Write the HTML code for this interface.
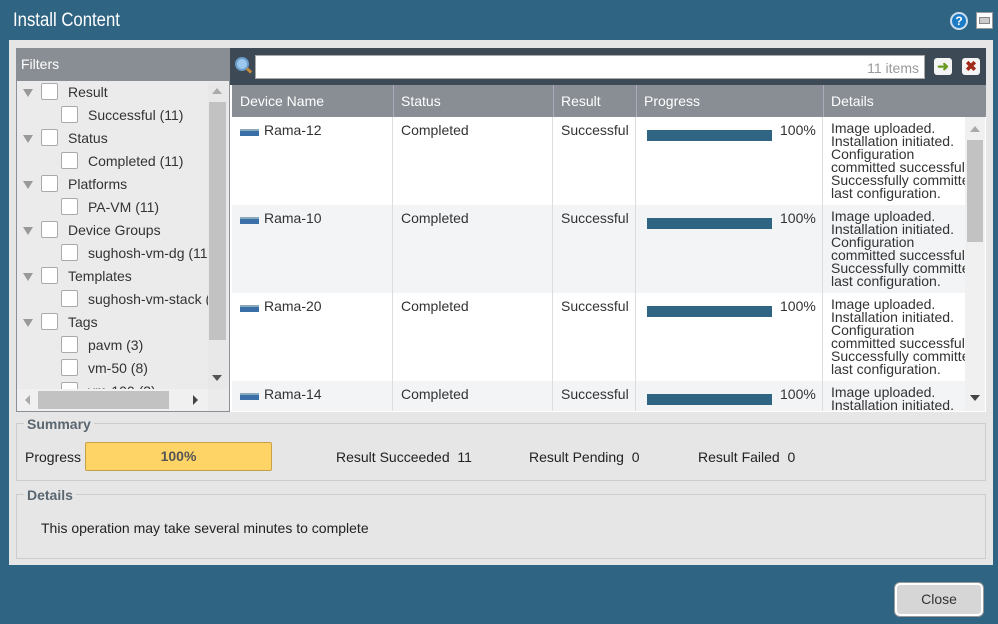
<!DOCTYPE html><html><head><style>
*{box-sizing:border-box;margin:0;padding:0}
body{width:998px;height:624px;background:#2f6583;font-family:"Liberation Sans",sans-serif;font-size:14px;color:#333;position:relative;overflow:hidden}
.a{position:absolute}
.cb{position:absolute;width:17px;height:17px;background:#fff;border:1px solid #aaa;border-radius:2px}
.tri{position:absolute;width:0;height:0;border-left:5px solid transparent;border-right:5px solid transparent;border-top:8px solid #999}
.fl{position:absolute;font-size:14px;color:#333}
.row{position:absolute;left:232px;width:733px;height:88px}
.row div{position:absolute;top:5px}
.bar{position:absolute;left:11px;top:8px!important;width:125px;height:11px;background:#2f6583}
.ic{position:absolute;left:8px;top:12px!important;width:19px;height:7px;background:#3a6fa8;border-top:2px solid #8ab}
.det{left:599px;width:134px;height:83px;line-height:13px;overflow:hidden;font-size:14px;white-space:nowrap}
.vl{position:absolute;width:1px;background:#ddd}
</style></head><body>
<div class="a" style="left:13px;top:10px;color:#fff;font-size:19px;transform:scaleX(.88);transform-origin:left">Install Content</div>
<div class="a" style="left:950px;top:12px;width:18px;height:18px;border-radius:50%;background:#1b7bc4;border:2px solid #cde;color:#fff;font-weight:bold;font-size:12px;text-align:center;line-height:14px">?</div>
<div class="a" style="left:976px;top:12px;width:17px;height:17px;background:#fff;border:1px solid #999"><div style="margin:4px 2px;height:7px;border:1px solid #888;background:#ccc"></div></div>
<div class="a" style="left:9px;top:40px;width:984px;height:525px;background:#e6e6e6"></div>
<div class="a" style="left:16px;top:48px;width:214px;height:364px;background:#ebebeb;border:1px solid #8a9096"></div>
<div class="a" style="left:16px;top:48px;width:214px;height:33px;background:#888e94;color:#fff;padding:8px 5px">Filters</div>
<div class="a" style="left:208px;top:82px;width:20px;height:307px;background:#e8e8e8"></div>
<div class="a" style="left:209px;top:102px;width:17px;height:238px;background:#c2c2c2"></div>
<div class="a" style="left:212px;top:88px;border-left:5px solid transparent;border-right:5px solid transparent;border-bottom:6px solid #aaa"></div>
<div class="a" style="left:212px;top:375px;border-left:5px solid transparent;border-right:5px solid transparent;border-top:6px solid #555"></div>
<div class="a" style="left:17px;top:389px;width:191px;height:22px;background:#f0f0f0"></div>
<div class="a" style="left:38px;top:391px;width:131px;height:18px;background:#c2c2c2"></div>
<div class="a" style="left:25px;top:395px;border-top:5px solid transparent;border-bottom:5px solid transparent;border-right:5px solid #aaa"></div>
<div class="a" style="left:193px;top:395px;border-top:5px solid transparent;border-bottom:5px solid transparent;border-left:5px solid #444"></div>
<div class="a" style="left:17px;top:82px;width:191px;height:307px;overflow:hidden">
<div class="tri" style="left:6px;top:7px"></div><div class="cb" style="left:24px;top:1px"></div><div class="fl" style="left:51px;top:2px">Result</div>
<div class="cb" style="left:44px;top:24px"></div><div class="fl" style="left:71px;top:25px">Successful (11)</div>
<div class="tri" style="left:6px;top:53px"></div><div class="cb" style="left:24px;top:47px"></div><div class="fl" style="left:51px;top:48px">Status</div>
<div class="cb" style="left:44px;top:70px"></div><div class="fl" style="left:71px;top:71px">Completed (11)</div>
<div class="tri" style="left:6px;top:99px"></div><div class="cb" style="left:24px;top:93px"></div><div class="fl" style="left:51px;top:94px">Platforms</div>
<div class="cb" style="left:44px;top:116px"></div><div class="fl" style="left:71px;top:117px">PA-VM (11)</div>
<div class="tri" style="left:6px;top:145px"></div><div class="cb" style="left:24px;top:139px"></div><div class="fl" style="left:51px;top:140px">Device Groups</div>
<div class="cb" style="left:44px;top:162px"></div><div class="fl" style="left:71px;top:163px;white-space:nowrap">sughosh-vm-dg (11)</div>
<div class="tri" style="left:6px;top:191px"></div><div class="cb" style="left:24px;top:185px"></div><div class="fl" style="left:51px;top:186px">Templates</div>
<div class="cb" style="left:44px;top:208px"></div><div class="fl" style="left:71px;top:209px;white-space:nowrap">sughosh-vm-stack (11)</div>
<div class="tri" style="left:6px;top:237px"></div><div class="cb" style="left:24px;top:231px"></div><div class="fl" style="left:51px;top:232px">Tags</div>
<div class="cb" style="left:44px;top:254px"></div><div class="fl" style="left:71px;top:255px">pavm (3)</div>
<div class="cb" style="left:44px;top:277px"></div><div class="fl" style="left:71px;top:278px">vm-50 (8)</div>
<div class="cb" style="left:44px;top:300px"></div><div class="fl" style="left:71px;top:301px">vm-100 (3)</div>
</div>
<div class="a" style="left:230px;top:48px;width:756px;height:364px;background:#fff"></div>
<div class="a" style="left:230px;top:48px;width:756px;height:37px;background:#3d4a55"></div>
<div class="a" style="left:235px;top:57px;width:14px;height:14px;border-radius:50%;background:#9cc8ee;border:2px solid #6a9cc8"></div>
<div class="a" style="left:246px;top:69px;width:6px;height:3px;background:#c08a3a;transform:rotate(45deg)"></div>
<div class="a" style="left:255px;top:55px;width:670px;height:24px;background:#fff;border:1px solid #aaa;text-align:right;padding:4px 5px;color:#999">11 items</div>
<div class="a" style="left:934px;top:58px;width:18px;height:17px;background:#f4f4f4;border-radius:3px;color:#6a9a1f;font-weight:bold;text-align:center;line-height:16px">➜</div>
<div class="a" style="left:962px;top:58px;width:18px;height:17px;background:#f4f4f4;border-radius:3px;color:#a02a1a;font-weight:bold;text-align:center;line-height:17px">✖</div>
<div class="a" style="left:232px;top:85px;width:754px;height:32px;background:#888e94;color:#fff">
<div class="a" style="left:8px;top:8px">Device Name</div><div class="a" style="left:161px;top:0;width:1px;height:32px;background:#aab"></div>
<div class="a" style="left:169px;top:8px">Status</div><div class="a" style="left:321px;top:0;width:1px;height:32px;background:#aab"></div>
<div class="a" style="left:329px;top:8px">Result</div><div class="a" style="left:404px;top:0;width:1px;height:32px;background:#aab"></div>
<div class="a" style="left:412px;top:8px">Progress</div><div class="a" style="left:591px;top:0;width:1px;height:32px;background:#aab"></div>
<div class="a" style="left:599px;top:8px">Details</div>
</div>
<div class="a" style="left:232px;top:117px;width:733px;height:294px;overflow:hidden">
<div class="row" style="left:0;top:0;background:#fff"><div class="ic"></div><div style="left:32px">Rama-12</div><div style="left:169px">Completed</div><div style="left:329px">Successful</div><div style="left:404px;width:187px"><div class="bar"></div><div style="left:144px;top:0">100%</div></div><div class="det">Image uploaded.<br>Installation initiated.<br>Configuration<br>committed successfully.<br>Successfully committed<br>last configuration.</div></div>
<div class="row" style="left:0;top:88px;background:#f2f4f6"><div class="ic"></div><div style="left:32px">Rama-10</div><div style="left:169px">Completed</div><div style="left:329px">Successful</div><div style="left:404px;width:187px"><div class="bar"></div><div style="left:144px;top:0">100%</div></div><div class="det">Image uploaded.<br>Installation initiated.<br>Configuration<br>committed successfully.<br>Successfully committed<br>last configuration.</div></div>
<div class="row" style="left:0;top:176px;background:#fff"><div class="ic"></div><div style="left:32px">Rama-20</div><div style="left:169px">Completed</div><div style="left:329px">Successful</div><div style="left:404px;width:187px"><div class="bar"></div><div style="left:144px;top:0">100%</div></div><div class="det">Image uploaded.<br>Installation initiated.<br>Configuration<br>committed successfully.<br>Successfully committed<br>last configuration.</div></div>
<div class="row" style="left:0;top:264px;background:#f2f4f6"><div class="ic"></div><div style="left:32px">Rama-14</div><div style="left:169px">Completed</div><div style="left:329px">Successful</div><div style="left:404px;width:187px"><div class="bar"></div><div style="left:144px;top:0">100%</div></div><div class="det">Image uploaded.<br>Installation initiated.</div></div>
<div class="vl" style="left:160px;top:0;height:294px"></div><div class="vl" style="left:320px;top:0;height:294px"></div><div class="vl" style="left:403px;top:0;height:294px"></div><div class="vl" style="left:590px;top:0;height:294px"></div>
</div>
<div class="a" style="left:965px;top:117px;width:20px;height:294px;background:#f0f0f0"></div>
<div class="a" style="left:967px;top:140px;width:16px;height:102px;background:#c2c2c2"></div>
<div class="a" style="left:970px;top:126px;border-left:5px solid transparent;border-right:5px solid transparent;border-bottom:6px solid #aaa"></div>
<div class="a" style="left:970px;top:395px;border-left:5px solid transparent;border-right:5px solid transparent;border-top:6px solid #444"></div>
<div class="a" style="left:16px;top:423px;width:970px;height:58px;border:1px solid #ccc"></div>
<div class="a" style="left:24px;top:416px;padding:0 3px;background:#e6e6e6;color:#5a6670;font-weight:bold">Summary</div>
<div class="a" style="left:25px;top:449px;color:#222">Progress</div>
<div class="a" style="left:85px;top:442px;width:187px;height:29px;background:#ffd466;border:1px solid #c9a04a;border-radius:2px;text-align:center;line-height:27px;font-weight:bold;color:#555">100%</div>
<div class="a" style="left:336px;top:449px;color:#222">Result Succeeded&nbsp; 11</div>
<div class="a" style="left:529px;top:449px;color:#222">Result Pending&nbsp; 0</div>
<div class="a" style="left:698px;top:449px;color:#222">Result Failed&nbsp; 0</div>
<div class="a" style="left:16px;top:494px;width:970px;height:65px;border:1px solid #ccc"></div>
<div class="a" style="left:24px;top:487px;padding:0 3px;background:#e6e6e6;color:#5a6670;font-weight:bold">Details</div>
<div class="a" style="left:41px;top:520px;color:#222">This operation may take several minutes to complete</div>
<div class="a" style="left:895px;top:583px;width:88px;height:33px;background:#d6d6d6;border:2px solid #fff;border-radius:5px;box-shadow:0 0 0 1px #999;text-align:center;line-height:29px;color:#333">Close</div>
</body></html>
